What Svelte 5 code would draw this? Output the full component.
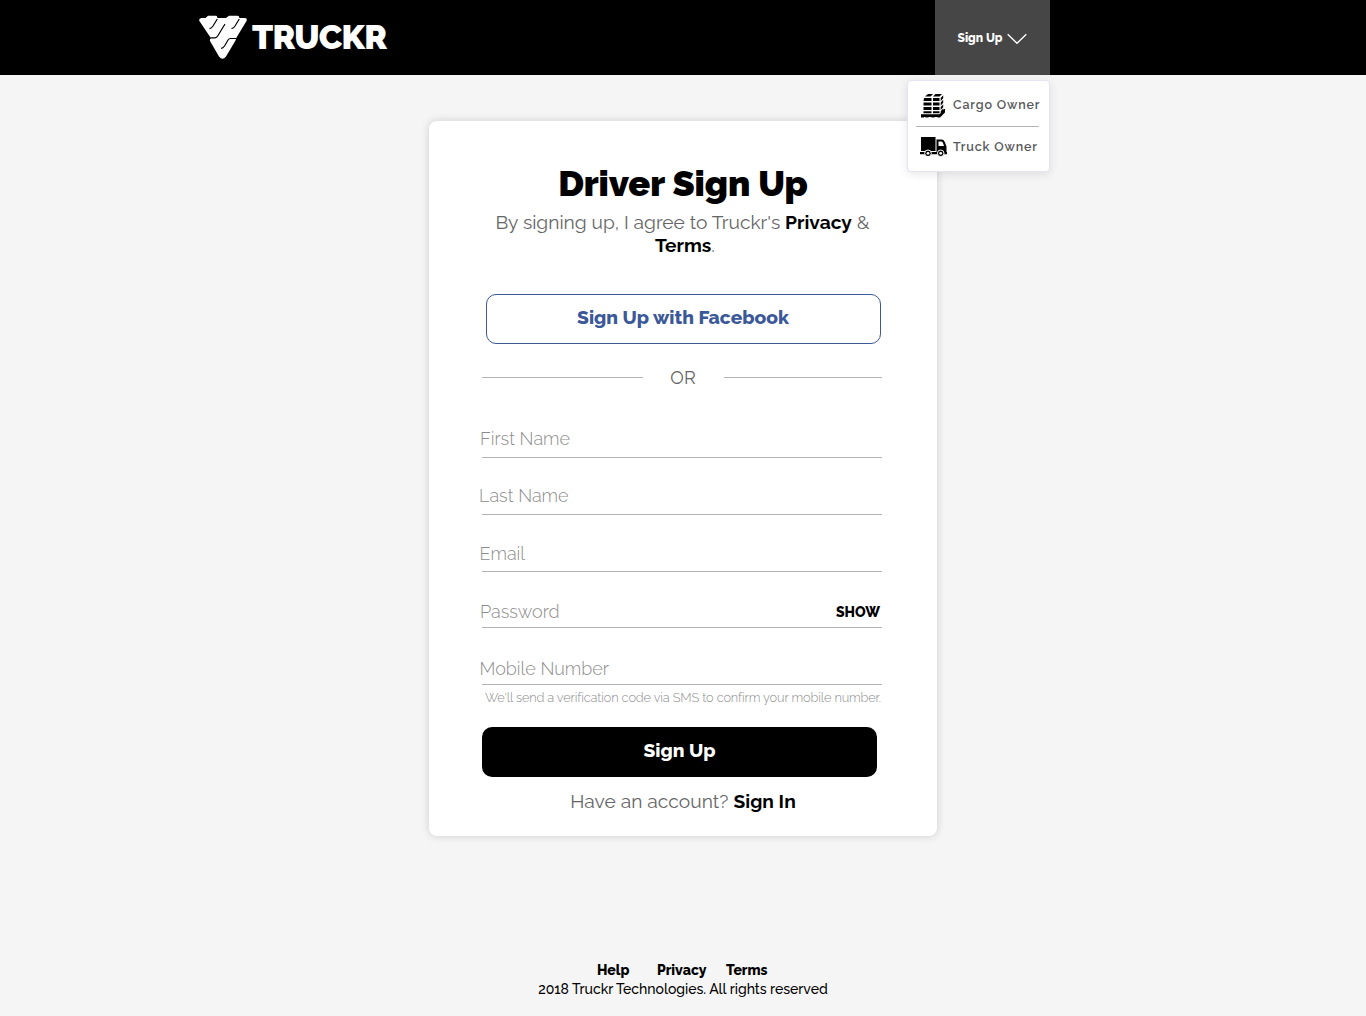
<script>
  const fields = [
    { label: 'First Name', type: 'text', key: 'first' },
    { label: 'Last Name', type: 'text', key: 'last' },
    { label: 'Email', type: 'email', key: 'email' },
    { label: 'Password', type: 'password', key: 'password' },
    { label: 'Mobile Number', type: 'tel', key: 'mobile' }
  ];
</script>

<div class="page">
  <header>
    <a class="brand" href="#home" aria-label="Truckr">
      <svg class="mark" viewBox="0 0 48 44">
        <path d="M2.500 3H6.500L9 .7H17Q18.500 1 18.300 3H27L30 .7H38.500Q40.500 1 40.300 3H46Q48.600 3.500 47.500 6L37.500 22.500 36.500 25.500 27 41.500Q23.500 46 20 41.500L11 26Q10.600 24 12 23.300L.4 6Q-.6 3.500 2.500 3Z" fill="#fff" />
        <g fill="none" stroke="#000" stroke-width="1.2" stroke-linejoin="round">
          <path d="M18.300 4 14 11Q12.500 13.300 10.500 13.700M26 9 19 20.500Q17.700 22.800 16 22.800H11.500M40.300 4 36 11Q34.500 13.300 32.500 13.700M37.500 23.500H31.500Q30 23.500 29 25L25.500 31Q24 33.300 22 33.300" />
        </g>
      </svg>
      <span class="wordmark">TRUCKR</span>
    </a>
    <nav>
      <button class="toggle" type="button">
        <span>Sign Up</span>
        <svg viewBox="0 0 20 12"><path d="M.7 1.200 10 10.300 19.300 1.200" fill="none" stroke="#fff" stroke-width="1.3" /></svg>
      </button>
      <div class="menu">
        <a href="#cargo">
          <svg class="cargo" viewBox="0 0 24 25">
            <path d="M4 3.500 7 1h5l-2.500 2.500zM12 3.500 14.500 1H21l-2.500 2.500zM3 5h7.500v3H2.500zM12 5h6.500v3H12zM2.500 9.500h8v3h-8zM12 9.500h6.500v3H12zM2.500 14h8v3h-8zM12 14h6.500v3H12zM2.500 18.300h8v2h-8zM12 18.300h6.500v2H12zM19.700 5l2.500-2.800v3l-2.500 2.800zM19.700 9.500l2.500-2.800v3l-2.500 2.800zM19.700 14l2.500-2.800v3l-2.500 2.800zM19.700 18.300l2.500-2.800v2.500l-2.500 2.500zM0 21.300h18.500l4.500-5.300h1v3.500L19 24.500h-2.500v-.5h-3v.5h-3v-.5h-3v.5h-3v-.5H3v.5H0z" />
          </svg>
          <span>Cargo Owner</span>
        </a>
        <a href="#truck">
          <svg class="truck" viewBox="0 0 28 20">
            <path d="M1 0h14.500v14H1zM0 15h27v2.200H0zM16.500 2.500H22q2 0 3 3l1.500 4V15h-10z" />
            <path d="M18.500 4.500h3q1 0 1.500 1.500l1 3h-5.500z" fill="#fff" />
            <g stroke="#fff"><circle cx="8" cy="16.300" r="3.300" /><circle cx="20.700" cy="16.300" r="3.300" /></g>
            <circle cx="8" cy="16.300" r="1.400" fill="#fff" /><circle cx="20.700" cy="16.300" r="1.400" fill="#fff" />
          </svg>
          <span>Truck Owner</span>
        </a>
      </div>
    </nav>
  </header>

  <main>
    <h1>Driver Sign Up</h1>
    <p class="agree">By signing up, I agree to Truckr's <a href="#privacy">Privacy</a> &amp; <a class="terms" href="#terms">Terms</a>.</p>
    <button class="facebook" type="button">Sign Up with Facebook</button>
    <div class="or"><span>OR</span></div>
    <form>
      {#each fields as field}
        <div class="field {field.key}">
          <input type={field.type} placeholder={field.label} aria-label={field.label} />
          {#if field.type === 'password'}<button class="show" type="button">SHOW</button>{/if}
        </div>
      {/each}
      <p class="hint">We'll send a verification code via SMS to confirm your mobile number.</p>
      <button class="submit" type="button">Sign Up</button>
    </form>
    <p class="account">Have an account? <a href="#signin">Sign In</a></p>
  </main>

  <footer>
    <div class="links">
      <a href="#help">Help</a>
      <a href="#privacy">Privacy</a>
      <a href="#terms">Terms</a>
    </div>
    <p>2018 Truckr Technologies. All rights reserved</p>
  </footer>
</div>

<style>
  :global(body) { background: #f5f5f5; }
  .page {
    display: flex;
    flex-direction: column;
    align-items: center;
    height: 1016px;
    background: #f5f5f5;
    font-family: Raleway, Lato, "Open Sans", sans-serif;
    color: #000;
  }
  a { color: inherit; text-decoration: none; }
  p, h1 { margin: 0; }
  button, input { font-family: inherit; padding: 0; border: 0; background: none; box-sizing: border-box; }
  header {
    align-self: stretch;
    box-sizing: border-box;
    height: 75px;
    padding: 0 316px 0 199px;
    display: flex;
    justify-content: space-between;
    background: #000;
    color: #fff;
  }
  .brand { display: flex; align-items: center; gap: 5px; }
  .mark { width: 48px; height: 44px; margin-bottom: 1px; }
  .wordmark { font-size: 34px; line-height: 40px; font-weight: 900; letter-spacing: -0.8px; padding-bottom: 2px; }
  nav { position: relative; width: 115px; }
  .toggle {
    display: flex;
    align-items: center;
    gap: 5px;
    width: 115px;
    height: 75px;
    padding-left: 22.500px;
    background: #464646;
    color: #fff;
    font-size: 12px;
    font-weight: 800;
  }
  .toggle svg { width: 20px; height: 12px; margin-top: 2px; }
  .menu {
    position: absolute;
    top: 80px;
    right: 0;
    box-sizing: border-box;
    width: 143px;
    height: 92px;
    padding: 0 10px 0 8px;
    border: 1px solid #e4e4f2;
    border-radius: 4px;
    background: #fff;
    box-shadow: 0 2px 10px rgba(0, 0, 0, 0.1);
  }
  .menu a {
    display: flex;
    align-items: center;
    height: 45px;
    color: #58585a;
    font-size: 12.5px;
    font-weight: 600;
    letter-spacing: 0.85px;
    white-space: nowrap;
  }
  .menu a + a { border-top: 1px solid #b3b3b3; height: 40px; }
  .menu svg { color: #000; flex: none; }
  .menu span { padding-top: 1px; }
  .menu a + a span { padding: 0 0 1px; }
  .cargo { width: 24px; height: 25px; margin: 4px 8px 0 5px; }
  .truck { width: 28px; height: 20px; margin: 0 5px 0 4px; }
  main {
    box-sizing: border-box;
    width: 508px;
    height: 715px;
    margin-top: 46px;
    padding: 42px 55px 0 53px;
    border-radius: 8px;
    background: #fff;
    box-shadow: 0 0 9px rgba(0, 0, 0, 0.16);
  }
  h1 { padding-left: 2px; font-size: 36px; line-height: 40px; font-weight: 900; letter-spacing: -0.08px; text-align: center; }
  .agree { margin-top: 8px; padding-left: 1px; font-size: 19.2px; line-height: 23px; text-align: center; color: #666; }
  .agree a, .account a { color: #000; font-weight: 700; }
  .agree .terms { margin-left: 5px; }
  .facebook {
    display: block;
    width: 395px;
    height: 50px;
    margin: 37px 0 0 4px;
    padding: 0 1px 4px 0;
    border: 1px solid #3b5998;
    border-radius: 10px;
    color: #3b5998;
    font-size: 19.2px;
    font-weight: 800;
  }
  .or {
    display: flex;
    align-items: center;
    height: 23px;
    margin-top: 22px;
    font-size: 18px;
    line-height: 23px;
    color: #666;
  }
  .or::before, .or::after { content: ""; height: 1px; background: #b3b3b3; }
  .or::before { width: 161px; }
  .or::after { width: 158px; }
  .or span { width: 80px; padding-right: 1px; text-align: center; }
  form { margin-top: 12px; }
  .field {
    display: flex;
    align-items: flex-end;
    box-sizing: border-box;
    height: 57px;
    padding-bottom: 7px;
    border-bottom: 1px solid #b3b3b3;
  }
  input { flex: 1; min-width: 0; height: 24px; margin-left: -2px; font-size: 18px; font-weight: 300; outline: none; }
  input::placeholder { color: #8c8c8c; opacity: 1; }
  .last input { margin-left: -3px; }
  .email input, .mobile input { margin-left: -2.500px; }
  .email { padding-bottom: 6px; }
  .password { height: 56px; padding-bottom: 4px; }
  .mobile { padding-bottom: 4px; }
  .show { height: 22px; margin-right: 2px; font-size: 14px; font-weight: 800; }
  .hint { margin: 5px 0 0 3px; font-size: 12.8px; line-height: 16px; font-weight: 300; letter-spacing: -0.135px; color: #8c8c8c; white-space: nowrap; }
  .submit {
    display: block;
    width: 395px;
    height: 50px;
    margin-top: 21px;
    padding-bottom: 4px;
    border-radius: 10px;
    background: #000;
    color: #fff;
    font-size: 19.2px;
    font-weight: 800;
  }
  .account { margin-top: 13px; padding-left: 2px; font-size: 19.2px; line-height: 23px; letter-spacing: 0.04px; text-align: center; color: #666; }
  footer { width: 292px; margin-top: 125px; font-size: 14px; line-height: 19px; white-space: nowrap; text-align: center; }
  .links { display: grid; grid-template-columns: 60px 69px auto; padding-left: 60px; text-align: left; font-weight: 800; }
  footer p { font-weight: 500; letter-spacing: -0.02px; }
</style>
